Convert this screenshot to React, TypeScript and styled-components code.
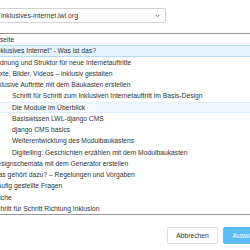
import React from "react";
import styled, { createGlobalStyle } from "styled-components";

const GlobalStyle = createGlobalStyle`
  html, body {
    margin: 0;
    padding: 0;
    overflow: hidden;
    background: #ffffff;
  }
  body {
    font-family: "Liberation Sans", Arial, sans-serif;
    color: #333333;
  }
`;

type Level = 0 | 1 | 2;
type State = "none" | "selected" | "hover";

interface Page {
  title: string;
  level: Level;
  state?: State;
}

const pages: Page[] = [
  { title: "Startseite", level: 0 },
  { title: "„Inklusives Internet\" - Was ist das?", level: 1, state: "selected" },
  { title: "Ordnung und Struktur für neue Internetauftritte", level: 1 },
  { title: "Texte, Bilder, Videos – inklusiv gestalten", level: 1 },
  { title: "Inklusive Auftritte mit dem Baukasten erstellen", level: 1 },
  { title: "Schritt für Schritt zum Inklusiven Internetauftritt im Basis-Design", level: 2 },
  { title: "Die Module im Überblick", level: 2, state: "hover" },
  { title: "Basiswissen LWL-django CMS", level: 2 },
  { title: "django CMS basics", level: 2 },
  { title: "Weiterentwicklung des Modulbaukastens", level: 2 },
  { title: "Digitelling: Geschichten erzählen mit dem Modulbaukasten", level: 2 },
  { title: "Designschemata mit dem Generator erstellen", level: 1 },
  { title: "Was gehört dazu? – Regelungen und Vorgaben", level: 1 },
  { title: "Häufig gestellte Fragen", level: 1 },
  { title: "Suche", level: 1 },
  { title: "Schritt für Schritt Richtung Inklusion", level: 1 },
];

const indent: Record<Level, number> = { 0: 5.7, 1: 12.5, 2: 32 };

const rowBorder = (s: State) =>
  s === "selected" ? "#b5daf2" : s === "hover" ? "#ddecf8" : "transparent";

export default function App() {
  return (
    <>
      <GlobalStyle />
      <Dialog>
        <SiteSelect>
          <span>inklusives-internet.lwl.org</span>
          <svg width="5" height="4" viewBox="0 0 10 8">
            <path d="M1.5 2 L5 5.5 L8.5 2" fill="none" stroke="#555" strokeWidth="1.6" />
          </svg>
        </SiteSelect>
        <Tree>
          {pages.map((p) => (
            <Row key={p.title} $level={p.level} $state={p.state ?? "none"}>
              {p.title}
            </Row>
          ))}
        </Tree>
        <Footer>
          <Button>Abbrechen</Button>
          <Button $primary>Auswählen</Button>
        </Footer>
      </Dialog>
    </>
  );
}

const Dialog = styled.div`
  margin-left: -20px;
  width: 300px;
  padding-top: 8px;
  display: flex;
  flex-direction: column;
`;

const SiteSelect = styled.div`
  box-sizing: border-box;
  width: 186px;
  height: 15px;
  border: 1px solid #d2d2d2;
  border-radius: 2px;
  padding: 0 5px 0 20px;
  display: flex;
  align-items: center;
  justify-content: space-between;
  font-size: 6.9px;
  color: #333;
`;

const Tree = styled.div`
  margin-top: 10px;
  border-top: 1px solid #9a9a9a;
  border-bottom: 1px solid #9a9a9a;
  display: flex;
  flex-direction: column;
`;

const Row = styled.div<{ $level: Level; $state: State }>`
  box-sizing: border-box;
  height: 11.25px;
  line-height: 9.25px;
  font-size: 6.75px;
  white-space: nowrap;
  padding-left: ${(p) => indent[p.$level]}px;
  background: ${(p) =>
    p.$state === "selected" ? "#e5f3fc" : p.$state === "hover" ? "#f4f9fd" : "transparent"};
  border-top: 1px solid ${(p) => rowBorder(p.$state)};
  border-bottom: 1px solid ${(p) => rowBorder(p.$state)};
`;

const Footer = styled.div`
  margin-top: 12px;
  padding-left: 187px;
  display: flex;
  gap: 5px;
`;

const Button = styled.button<{ $primary?: boolean }>`
  box-sizing: border-box;
  width: ${(p) => (p.$primary ? 52 : 51)}px;
  height: 17px;
  padding: 0;
  border-radius: 2px;
  font-family: "Liberation Sans", Arial, sans-serif;
  font-size: 6.75px;
  border: 1px solid ${(p) => (p.$primary ? "#5cbdf6" : "#dddddd")};
  background: ${(p) => (p.$primary ? "#5cbdf6" : "#ffffff")};
  color: ${(p) => (p.$primary ? "#ffffff" : "#333333")};
`;
